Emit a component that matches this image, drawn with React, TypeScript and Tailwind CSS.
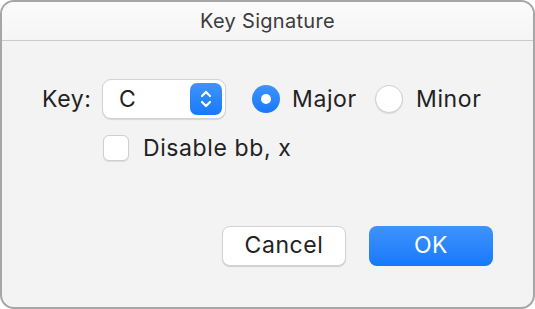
import React from "react";

const font = { fontFamily: "Inter, 'Noto Sans', sans-serif" };

export default function App() {
  return (
    <div className="w-[535px] h-[309px] bg-white" style={font}>
      <div className="w-full h-full rounded-[14px] border-2 border-[#a6a6a6] bg-[#f3f3f3] overflow-hidden flex flex-col">
        {/* Title bar */}
        <div className="h-[39px] shrink-0 flex items-center justify-center bg-gradient-to-b from-[#fbfbfb] to-[#f5f5f5] border-b border-[#cbcbcb]">
          <span className="text-[20px] text-[#3c3c3c] tracking-[0.3px]">Key Signature</span>
        </div>

        {/* Body */}
        <div className="flex flex-col pl-[40px] pt-[38px] text-[23px] tracking-[0.6px] text-[#222]">
          <div className="flex items-center h-[40px]">
            <span className="w-[60px]">Key:</span>
            <div className="w-[124px] h-[40px] rounded-[9px] bg-white border border-[#d2d2d2] shadow-[0_1px_1px_rgba(0,0,0,0.12)] flex items-center pl-[16px] pr-[3px]">
              <span className="flex-1">C</span>
              <div className="w-[32px] h-[32px] rounded-[7px] bg-gradient-to-b from-[#3e93fb] to-[#1579fb] flex items-center justify-center">
                <svg width="14" height="22" viewBox="0 0 14 22" fill="none" stroke="white" strokeWidth="2.2" strokeLinecap="round" strokeLinejoin="round">
                  <path d="M3 8 L7 4 L11 8" />
                  <path d="M3 14 L7 18 L11 14" />
                </svg>
              </div>
            </div>
            <div className="ml-[26px] w-[28px] h-[28px] rounded-full bg-gradient-to-b from-[#3e93fb] to-[#1579fb] flex items-center justify-center">
              <div className="w-[10px] h-[10px] rounded-full bg-white" />
            </div>
            <span className="ml-[12px] w-[83px]">Major</span>
            <div className="w-[28px] h-[28px] rounded-full bg-white border border-[#cfcfcf] shadow-[0_1px_1px_rgba(0,0,0,0.1)]" />
            <span className="ml-[13px]">Minor</span>
          </div>

          <div className="flex items-center mt-[12px] ml-[61px]">
            <div className="w-[26px] h-[26px] rounded-[6px] bg-white border border-[#cfcfcf] shadow-[0_1px_1px_rgba(0,0,0,0.1)]" />
            <span className="ml-[14px]">Disable bb, x</span>
          </div>
        </div>

        <div className="flex justify-end gap-[23px] pr-[40px] mt-[60px] text-[23px] tracking-[0.6px]">
          <button className="w-[124px] h-[40px] rounded-[8px] bg-white border border-[#d2d2d2] shadow-[0_1px_1px_rgba(0,0,0,0.15)] text-[#222]">
            Cancel
          </button>
          <button className="w-[124px] h-[40px] rounded-[8px] bg-gradient-to-b from-[#3e93fb] to-[#1579fb] text-white">
            OK
          </button>
        </div>
      </div>
    </div>
  );
}
